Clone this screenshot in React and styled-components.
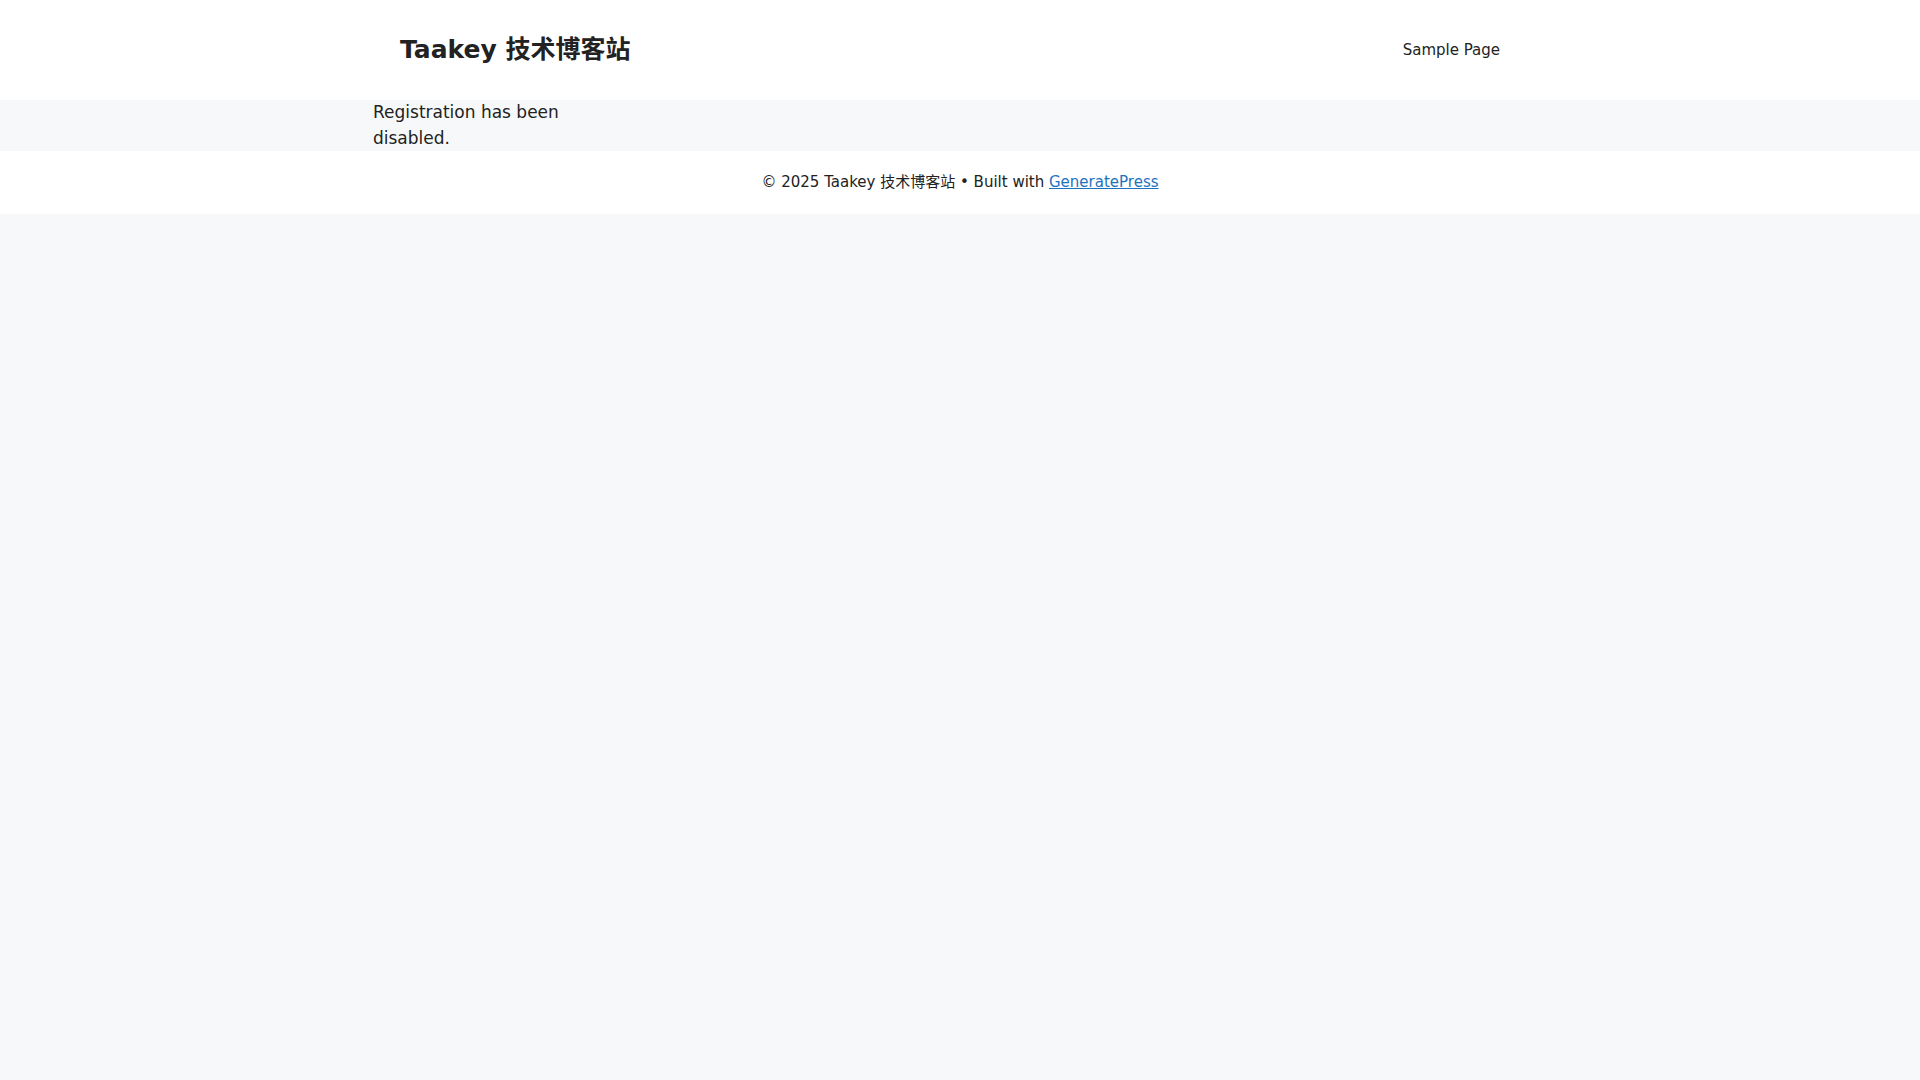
import React from 'react'
import styled, { createGlobalStyle } from 'styled-components'

const GlobalStyle = createGlobalStyle`
    *, *::before, *::after {
        box-sizing: border-box;
    }
    html, body {
        margin: 0;
        padding: 0;
        background: #f7f8f9;
        color: #222222;
        font-family: "DejaVu Sans", "Noto Sans CJK SC", sans-serif;
        font-size: 17px;
        line-height: 1.5;
    }
`;

const Header = styled.header`
    background: #ffffff;
`;
const InsideHeader = styled.div`
    max-width: 1200px;
    margin: 0 auto;
    padding: 20px 40px;
    display: flex;
    align-items: center;
    justify-content: space-between;
`;
const SiteTitle = styled.a`
    font-size: 25px;
    font-weight: 700;
    line-height: 1.5;
    color: #222222;
    text-decoration: none;
`;
const Nav = styled.ul`
    list-style: none;
    margin: 0;
    padding: 0;
    display: flex;
`;
const NavItem = styled.a`
    display: block;
    padding: 0 20px;
    line-height: 60px;
    font-size: 15px;
    color: #222222;
    text-decoration: none;
`;
const Content = styled.main`
    background: #f7f8f9;
`;
const ContentInner = styled.div`
    max-width: 1200px;
    margin: 0 auto;
`;
const Message = styled.p`
    margin: 0 0 0 13px;
    max-width: 205px;
`;
const Footer = styled.footer`
    background: #ffffff;
    padding: 20px 40px;
    text-align: center;
    font-size: 15px;
    line-height: 1.5;
`;
const FooterLink = styled.a`
    color: #1e73be;
`;

const App = () => {
  return (
    <>
      <GlobalStyle />
      <Header>
        <InsideHeader>
          <SiteTitle href="#">Taakey 技术博客站</SiteTitle>
          <Nav>
            <li><NavItem href="#">Sample Page</NavItem></li>
          </Nav>
        </InsideHeader>
      </Header>
      <Content>
        <ContentInner>
          <Message>Registration has been disabled.</Message>
        </ContentInner>
      </Content>
      <Footer>
        © 2025 Taakey 技术博客站 • Built with <FooterLink href="#">GeneratePress</FooterLink>
      </Footer>
    </>
  )
}

export default App
